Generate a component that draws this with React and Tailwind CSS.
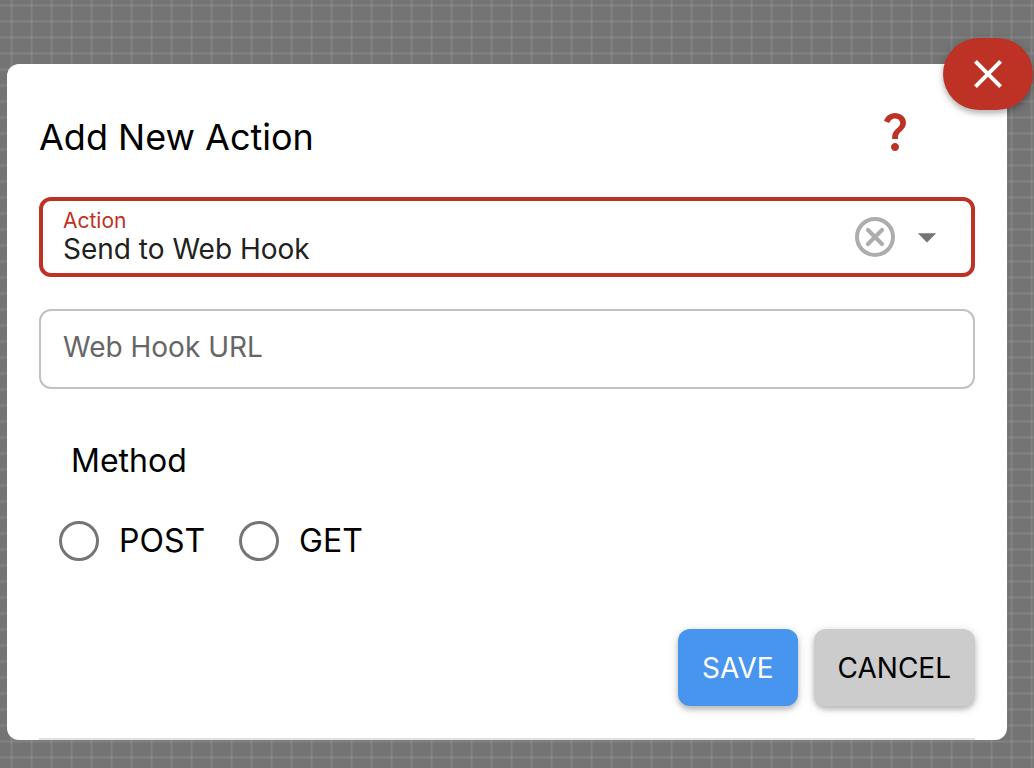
import { MdQuestionMark, MdArrowDropDown } from "react-icons/md";

function ActionField() {
  return (
    <div className="flex h-20 items-center rounded-xl border-4 border-[#be3125] px-5">
      <div className="flex min-w-0 flex-1 flex-col">
        <label htmlFor="action" className="text-[21px] leading-6 text-[#be3125]">Action</label>
        <select id="action" defaultValue="webhook" className="w-full appearance-none bg-transparent text-[28px] leading-8 text-[#212121] outline-none">
          <option value="webhook">Send to Web Hook</option>
        </select>
      </div>
      <button type="button" aria-label="Clear action" className="flex size-12 items-center justify-center">
        <svg viewBox="0 0 24 24" className="size-12" fill="none" stroke="#adadad" strokeWidth="2" aria-hidden="true">
          <circle cx="12" cy="12" r="9" />
          <path d="M8.5 8.5l7 7M15.5 8.5l-7 7" strokeWidth="2.1" strokeLinecap="round" />
        </svg>
      </button>
      <span className="ml-1 flex size-12 items-center justify-center text-[#757575]">
        <MdArrowDropDown className="size-11" aria-hidden="true" />
      </span>
    </div>
  );
}

function MethodOption({ label }) {
  return (
    <label className="flex items-center gap-5 text-[32px] leading-10">
      <input type="radio" name="method" value={label} className="size-10 appearance-none rounded-full border-3 border-[#757575] checked:border-[12px] checked:border-[#be3125]" />
      {label}
    </label>
  );
}

export default function App() {
  return (
    <div className="min-h-screen bg-[#747474] bg-[linear-gradient(to_right,#ffffff0c_1px,#ffffff18_1px,#ffffff18_2px,#ffffff0c_2px,#ffffff0c_3px,transparent_3px),linear-gradient(to_bottom,#ffffff0c_1px,#ffffff18_1px,#ffffff18_2px,#ffffff0c_2px,#ffffff0c_3px,transparent_3px)] bg-[size:20px_16px] bg-position-[10px_4px] pt-16 pr-[27px] pb-7 pl-[7px] font-['Inter',sans-serif] text-black">
      <main role="dialog" aria-labelledby="title" className="relative rounded-xl bg-white px-8">
        <button type="button" aria-label="Close" className="absolute -top-[26px] -right-[26px] flex h-18 w-[90px] items-center justify-center rounded-full bg-[#be3125] text-white shadow-[0_2px_10px_rgba(0,0,0,0.2),0_4px_4px_rgba(0,0,0,0.14)]">
          <svg viewBox="0 0 24 24" className="size-12" fill="none" stroke="currentColor" strokeWidth="2" aria-hidden="true">
            <path d="M5.7 5.7l12.6 12.6M18.3 5.7L5.7 18.3" />
          </svg>
        </button>
        <header className="flex items-start justify-between pt-[43px] pr-[56px]">
          <h1 id="title" className="text-4xl leading-[60px]">Add New Action</h1>
          <a href="#help" aria-label="Help" className="text-[#be3125]">
            <MdQuestionMark className="size-12" />
          </a>
        </header>
        <form className="pt-[30px]">
          <ActionField />
          <input type="url" aria-label="Web Hook URL" placeholder="Web Hook URL" className="mt-8 block h-20 w-full rounded-xl border-2 border-[#c2c2c2] px-[22px] pb-1 text-[28px] outline-none placeholder:text-[#666666]" />
          <fieldset className="pt-[52px] pl-5">
            <legend className="contents">
              <span className="block pl-3 text-[32px] leading-10">Method</span>
            </legend>
            <div className="mt-10 flex gap-[34px]">
              <MethodOption label="POST" />
              <MethodOption label="GET" />
            </div>
          </fieldset>
          <div className="mt-17 flex justify-end gap-4 pb-8 text-[28px]">
            <button type="button" className="h-[77px] rounded-xl bg-[#4895ef] px-6 text-white shadow-[0_2px_10px_rgba(0,0,0,0.2),0_4px_4px_rgba(0,0,0,0.14)]">SAVE</button>
            <button type="button" className="h-[77px] rounded-xl bg-[#cccccc] px-6 shadow-[0_2px_10px_rgba(0,0,0,0.2),0_4px_4px_rgba(0,0,0,0.14)]">CANCEL</button>
          </div>
        </form>
        <hr className="border-t-2 border-[#e0e0e0]" />
      </main>
    </div>
  );
}
